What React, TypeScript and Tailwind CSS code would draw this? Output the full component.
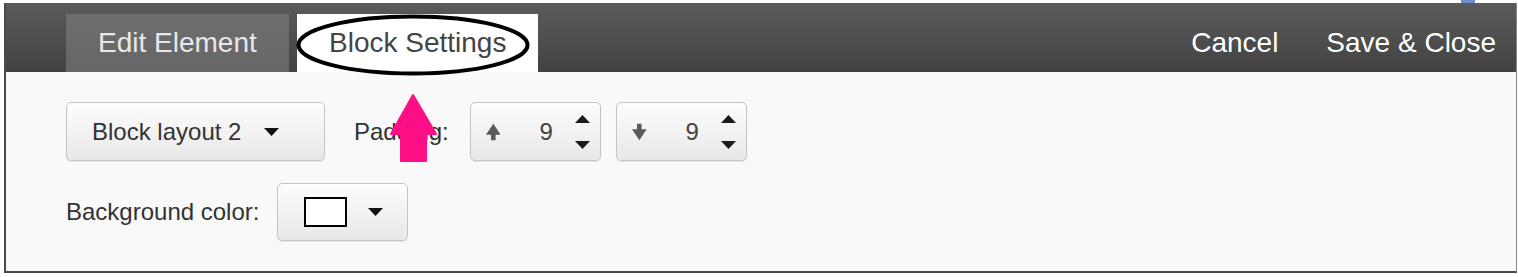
import React from "react";

const font = { fontFamily: '"Liberation Sans", Arial, sans-serif' };

function Caret({ className = "" }: { className?: string }) {
  return (
    <svg width="15" height="8" viewBox="0 0 15 8" className={className}>
      <polygon points="0,0 15,0 7.5,8" fill="#111" />
    </svg>
  );
}

function SpinArrows() {
  return (
    <div className="flex flex-col justify-between h-[34px]">
      <svg width="15" height="8" viewBox="0 0 15 8">
        <polygon points="7.5,0 15,8 0,8" fill="#1a1a1a" />
      </svg>
      <svg width="15" height="8" viewBox="0 0 15 8">
        <polygon points="0,0 15,0 7.5,8" fill="#1a1a1a" />
      </svg>
    </div>
  );
}

function SolidArrow({ down = false }: { down?: boolean }) {
  return (
    <svg width="16" height="18" viewBox="0 0 16 18" style={down ? { transform: "rotate(180deg)" } : undefined}>
      <polygon points="8,0 16,12 10.5,12 10.5,18 5.5,18 5.5,12 0,12" fill="#5a5a5a" />
    </svg>
  );
}

const btn =
  "flex items-center border border-[#c4c4c4] rounded-[5px] bg-gradient-to-b from-[#fdfdfd] to-[#e8e8e8] shadow-[0_1px_1px_rgba(0,0,0,0.08)]";

function Spinner({ down = false }: { down?: boolean }) {
  return (
    <div className={`${btn} w-[131px] h-[59px] pl-[15px] pr-[10px]`}>
      <SolidArrow down={down} />
      <span className="ml-[39px] text-[24px] text-[#444] leading-none">9</span>
      <div className="ml-[22px]">
        <SpinArrows />
      </div>
    </div>
  );
}

export default function App() {
  return (
    <div className="relative w-[1518px] h-[277px] bg-white overflow-hidden" style={font}>
      <div className="absolute left-[1461px] top-0 w-[14px] h-[3px] bg-[#6f8fd0]" />
      <div className="pt-[3px] pl-[4px]">
        <div className="w-[1513px] h-[270px] border-l-2 border-b-2 border-r border-l-[#4a4a4a] border-b-[#4a4a4a] border-r-[#8a8a8a] flex flex-col">
          {/* header */}
          <div className="h-[69px] bg-gradient-to-b from-[#5b5b5b] to-[#424242] flex items-end pl-[60px] pr-[20px]">
            <div className="w-[223px] h-[58px] bg-gradient-to-b from-[#6e6e6e] to-[#666] flex items-center pl-[32px] text-[28px] text-[#e8e8e8]">
              Edit Element
            </div>
            <div className="ml-[8px] w-[241px] h-[58px] bg-white flex items-center pl-[32px] text-[28px] text-[#444]">
              Block Settings
            </div>
            <div className="ml-auto self-stretch flex items-center pt-[11px] gap-[48px] text-[28px] text-white">
              <span>Cancel</span>
              <span>Save &amp; Close</span>
            </div>
          </div>
          {/* body */}
          <div className="flex-1 bg-[#f9f9f9] pl-[60px] pt-[30px] flex flex-col gap-[22px]">
            <div className="flex items-center">
              <div className={`${btn} w-[259px] h-[59px] pl-[25px]`}>
                <span className="text-[24px] text-[#333] leading-none">Block layout 2</span>
                <Caret className="ml-[23px]" />
              </div>
              <span className="ml-[29px] text-[24px] text-[#333]">Padding:</span>
              <div className="ml-[21px]">
                <Spinner />
              </div>
              <div className="ml-[15px]">
                <Spinner down />
              </div>
            </div>
            <div className="flex items-center">
              <span className="text-[24px] text-[#333]">Background color:</span>
              <div className={`${btn} ml-[18px] w-[131px] h-[58px] pl-[26px]`}>
                <div className="w-[43px] h-[30px] border-2 border-black bg-white" />
                <Caret className="ml-[21px]" />
              </div>
            </div>
          </div>
        </div>
      </div>
      {/* annotations */}
      <svg className="absolute left-0 top-0 pointer-events-none" width="1518" height="277" viewBox="0 0 1518 277">
        <ellipse cx="413" cy="45" rx="114.5" ry="28.5" fill="none" stroke="#000" strokeWidth="4" />
        <polygon
          points="413,95 436,134 426,134 426,161 401,161 401,134 391,134"
          fill="#ff0f86"
          stroke="#ff0f86"
          strokeWidth="2"
          strokeLinejoin="round"
        />
      </svg>
    </div>
  );
}
